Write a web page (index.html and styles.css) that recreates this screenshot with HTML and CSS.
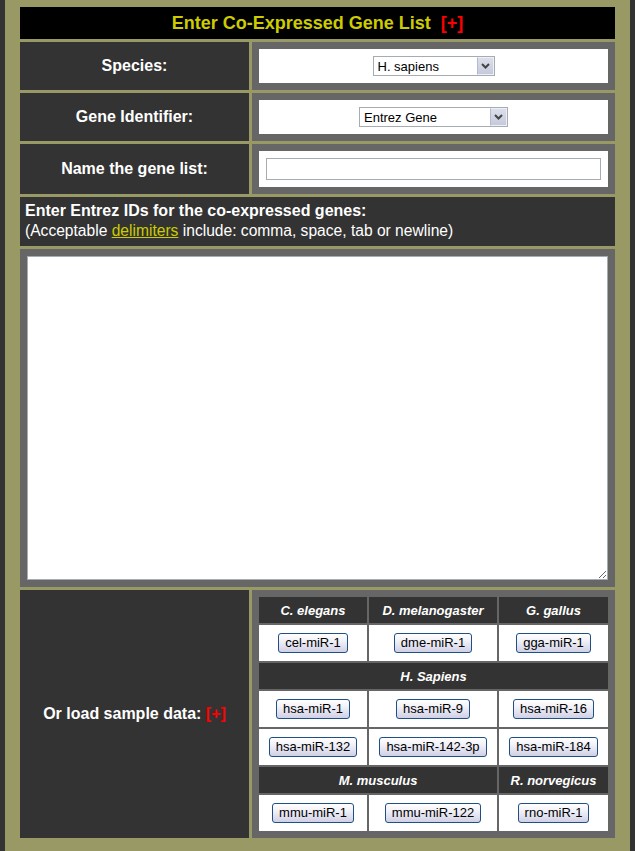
FILE: index.html
```html
<!DOCTYPE html>
<html>
<head>
<meta charset="utf-8">
<title>Enter Co-Expressed Gene List</title>
<link rel="stylesheet" href="styles.css">
</head>
<body>
<div class="page">
  <div class="form">
    <div class="title">Enter Co-Expressed Gene List<span class="plus">[+]</span></div>

    <div class="label">Species:</div>
    <div class="value">
      <div class="box">
        <div class="selwrap sel-species">
          <select class="sel"><option>H. sapiens</option></select>
          <span class="arrow"><svg width="9" height="6" viewBox="0 0 9 6"><path d="M1 1 L4.5 4.5 L8 1" fill="none" stroke="#444" stroke-width="2"/></svg></span>
        </div>
      </div>
    </div>

    <div class="label">Gene Identifier:</div>
    <div class="value">
      <div class="box">
        <div class="selwrap sel-gene">
          <select class="sel"><option>Entrez Gene</option></select>
          <span class="arrow"><svg width="9" height="6" viewBox="0 0 9 6"><path d="M1 1 L4.5 4.5 L8 1" fill="none" stroke="#444" stroke-width="2"/></svg></span>
        </div>
      </div>
    </div>

    <div class="label">Name the gene list:</div>
    <div class="value">
      <div class="box"><input class="txt" type="text"></div>
    </div>

    <div class="instr">
      <b>Enter Entrez IDs for the co-expressed genes:</b><br>
      <span class="note">(Acceptable <a href="#" class="link">delimiters</a> include: comma, space, tab or newline)</span>
    </div>

    <div class="areacell"><textarea class="area"></textarea></div>

    <div class="label">Or load sample data:&nbsp;<span class="plus-sm">[+]</span></div>
    <div class="value">
      <div class="samples">
        <div class="hd">C. elegans</div>
        <div class="hd">D. melanogaster</div>
        <div class="hd">G. gallus</div>
        <div class="bc"><button class="btn">cel-miR-1</button></div>
        <div class="bc"><button class="btn">dme-miR-1</button></div>
        <div class="bc"><button class="btn">gga-miR-1</button></div>
        <div class="hd span3">H. Sapiens</div>
        <div class="bc"><button class="btn">hsa-miR-1</button></div>
        <div class="bc"><button class="btn">hsa-miR-9</button></div>
        <div class="bc"><button class="btn">hsa-miR-16</button></div>
        <div class="bc"><button class="btn">hsa-miR-132</button></div>
        <div class="bc"><button class="btn">hsa-miR-142-3p</button></div>
        <div class="bc"><button class="btn">hsa-miR-184</button></div>
        <div class="hd span2">M. musculus</div>
        <div class="hd">R. norvegicus</div>
        <div class="bc"><button class="btn">mmu-miR-1</button></div>
        <div class="bc"><button class="btn">mmu-miR-122</button></div>
        <div class="bc"><button class="btn">rno-miR-1</button></div>
      </div>
    </div>
  </div>
</div>
</body>
</html>
```

FILE: styles.css
```css
html, body {
  margin: 0;
  padding: 0;
  background: #333333;
}
body {
  font-family: "Liberation Sans", Arial, sans-serif;
  color: #ffffff;
}
.page {
  margin-left: 5px;
  width: 625px;
  min-height: 851px;
  box-sizing: border-box;
  background: #999966;
  padding: 7px 15px 13px;
}
.form {
  display: grid;
  grid-template-columns: 229px 363px;
  grid-template-rows: 32px 48px 48px 50px 49px 338px 248px;
  gap: 3px;
}
.title {
  grid-column: 1 / 3;
  background: #000000;
  color: #cccc00;
  font-weight: bold;
  font-size: 18px;
  display: flex;
  align-items: center;
  justify-content: center;
}
.plus {
  color: #ff0000;
  margin-left: 10px;
}
.plus-sm {
  color: #ff0000;
}
.label {
  background: #333333;
  font-weight: bold;
  font-size: 16px;
  display: flex;
  align-items: center;
  justify-content: center;
}
.value {
  background: #666666;
  padding: 7px;
}
.box {
  background: #ffffff;
  padding: 7px;
  display: flex;
  justify-content: center;
}
.selwrap {
  position: relative;
  height: 20px;
}
.sel-species { width: 122px; }
.sel-gene { width: 149px; }
.sel {
  appearance: none;
  -webkit-appearance: none;
  width: 100%;
  height: 20px;
  box-sizing: border-box;
  border: 1px solid #a5acb2;
  border-radius: 0;
  background: #ffffff;
  font-family: "Liberation Sans", Arial, sans-serif;
  font-size: 13px;
  color: #000000;
  padding: 0 0 0 4px;
  margin: 0;
  outline: none;
}
.arrow {
  position: absolute;
  top: 1px;
  right: 1px;
  width: 17px;
  height: 18px;
  box-sizing: border-box;
  background: linear-gradient(#dcdfea, #c5c9dc);
  border: 1px solid #eef0f6;
  border-left-color: #b5bacc;
  display: flex;
  align-items: center;
  justify-content: center;
}
.txt {
  width: 100%;
  height: 22px;
  box-sizing: border-box;
  border: 1px solid #a5acb2;
  margin: 0;
  padding: 0 3px;
  font-family: "Liberation Sans", Arial, sans-serif;
  font-size: 13px;
}
.instr {
  grid-column: 1 / 3;
  background: #333333;
  font-size: 16px;
  line-height: 20px;
  padding: 4px 5px 5px;
}
.note {
  font-size: 15.6px;
}
.link {
  color: #cccc00;
  text-decoration: underline;
}
.areacell {
  grid-column: 1 / 3;
  background: #666666;
  padding: 7px;
}
.area {
  display: block;
  width: 581px;
  height: 324px;
  box-sizing: border-box;
  border: 1px solid #a5acb2;
  margin: 0;
  background: #ffffff;
  resize: both;
}
.samples {
  display: grid;
  grid-template-columns: 108px 128px 109px;
  grid-template-rows: 26px 36px 26px 36px 36px 26px 36px;
  gap: 2px;
  background: #666666;
}
.hd {
  background: #333333;
  color: #ffffff;
  font-weight: bold;
  font-style: italic;
  font-size: 13px;
  display: flex;
  align-items: center;
  justify-content: center;
}
.span3 { grid-column: 1 / 4; }
.span2 { grid-column: 1 / 3; }
.bc {
  background: #ffffff;
  display: flex;
  align-items: center;
  justify-content: center;
}
.btn {
  height: 20px;
  padding: 0 6px;
  margin: 0;
  border: 1px solid #1f4f85;
  border-radius: 3px;
  background: linear-gradient(#ffffff 0%, #f0f0f8 40%, #d0d0e6 100%);
  font-family: "Liberation Sans", Arial, sans-serif;
  font-size: 13px;
  color: #000000;
  line-height: 18px;
}
```
